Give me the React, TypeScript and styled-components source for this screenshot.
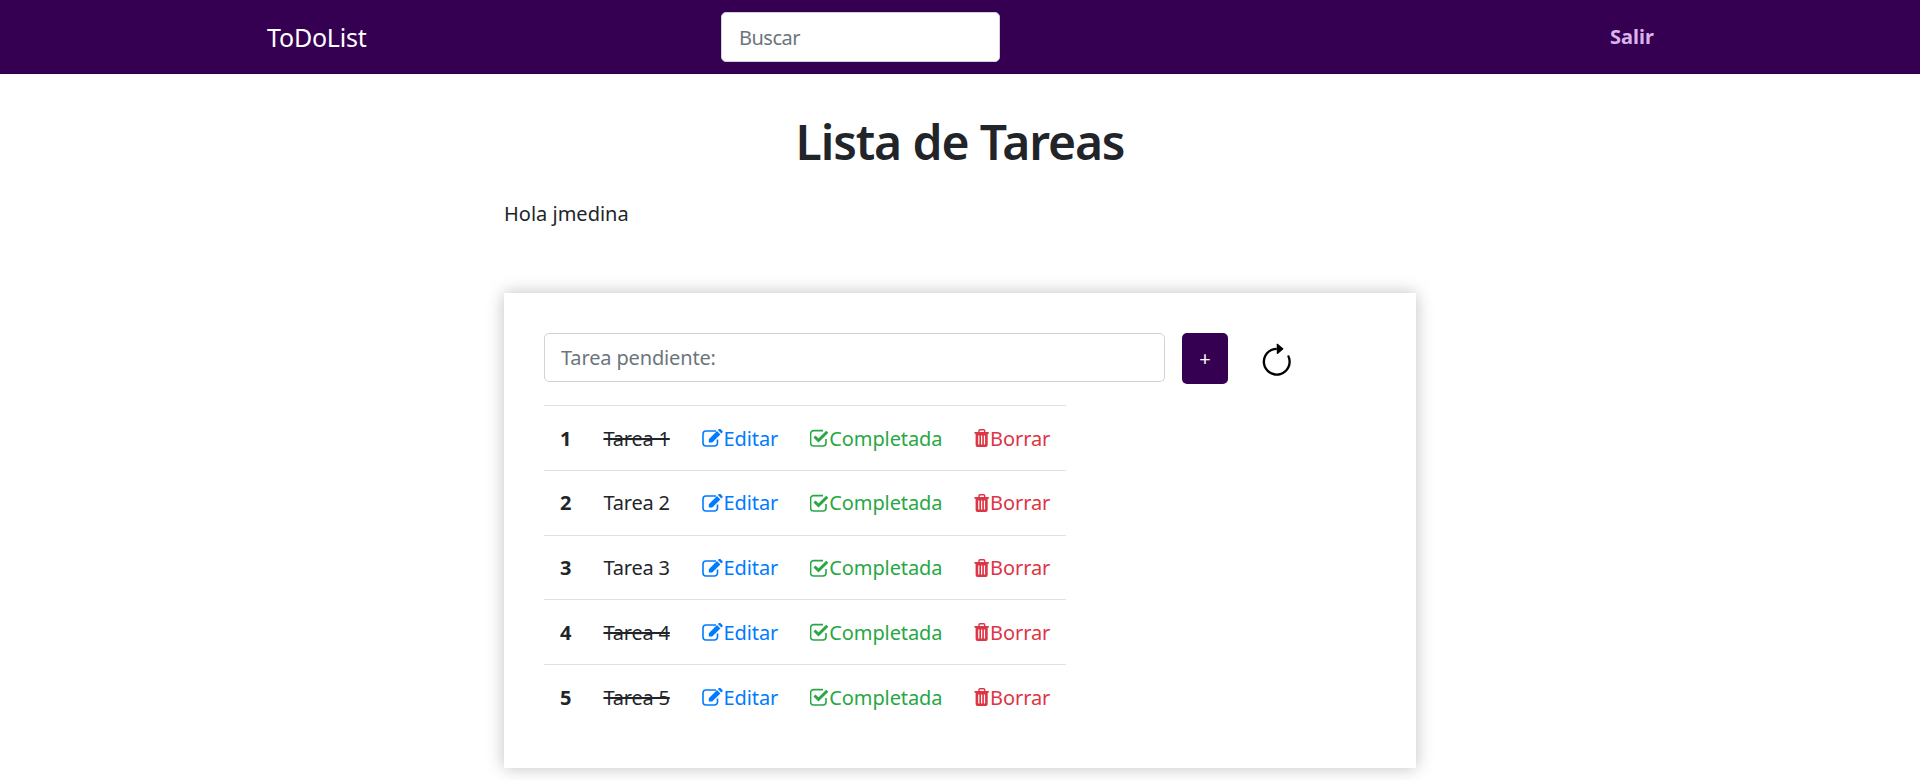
import React from "react";
import styled, { createGlobalStyle } from "styled-components";
import { BsArrowClockwise } from "react-icons/bs";

const FONT = `"Noto Sans", "Open Sans", sans-serif`;

const Global = createGlobalStyle`
  html, body { margin: 0; padding: 0; background: #fff; }
  body { font-family: ${FONT}; font-size: 20px; line-height: 32px; color: #212529; }
  * { box-sizing: border-box; }
`;

const Navbar = styled.nav`
  height: 74px;
  background: #360052;
  display: grid;
  grid-template-columns: 454px 889px auto;
  align-items: center;
  padding-left: 267px;
`;

const Brand = styled.a`
  color: #fff;
  font-size: 25px;
  line-height: 37px;
  letter-spacing: -0.2px;
`;

const SearchInput = styled.input`
  width: 279px;
  height: 50px;
  border: 1px solid #ced4da;
  border-radius: 5px;
  background: #fff;
  padding: 0 17px;
  font: inherit;
  letter-spacing: -0.5px;
  color: #495057;
  &::placeholder { color: #6c757d; opacity: 1; }
`;

const NavLink = styled.a`
  color: #d9b3ec;
  font-weight: 700;
`;

const Main = styled.main`
  width: 912px;
  margin: 0 auto;
  padding-bottom: 12px;
`;

const Title = styled.h1`
  margin: 38px 0 26px;
  font-size: 48px;
  line-height: 60px;
  font-weight: 600;
  letter-spacing: -1.1px;
  text-align: center;
  color: #212529;
`;

const Greeting = styled.p`
  margin: 0 0 63px;
`;

const Card = styled.section`
  background: #fff;
  padding: 40px 40px 39px;
  box-shadow: 0 0 16px rgba(0, 0, 0, 0.25);
`;

const Form = styled.form`
  display: flex;
  align-items: flex-start;
  margin-bottom: 21px;
`;

const TaskInput = styled.input`
  width: 621px;
  height: 49px;
  border: 1px solid #ced4da;
  border-radius: 5px;
  padding: 0 16px;
  font: inherit;
  letter-spacing: -0.15px;
  &::placeholder { color: #6c757d; opacity: 1; }
`;

const AddButton = styled.button`
  width: 46px;
  height: 51px;
  margin-left: 17px;
  border: none;
  border-radius: 5px;
  background: #360052;
  color: #fff;
  font-family: inherit;
  font-size: 20px;
`;

const Refresh = styled(BsArrowClockwise)`
  margin: 9.5px 0 0 30px;
  width: 37.5px;
  height: 37.5px;
  color: #000;
`;

const Table = styled.table`
  border-collapse: collapse;
`;

const Row = styled.tr`
  border-top: 1px solid #dee2e6;
`;

const Cell = styled.td`
  padding: 16.5px 16px 15.25px;
  white-space: nowrap;
  letter-spacing: -0.2px;
`;

const Num = styled.th`
  padding: 16.5px 16px 15.25px;
  font-weight: 700;
  text-align: left;
`;

const TaskName = styled.span<{ $done: boolean }>`
  text-decoration: ${(p) => (p.$done ? "line-through" : "none")};
`;

const Action = styled.a<{ $color: string }>`
  color: ${(p) => p.$color};
  letter-spacing: -0.1px;
`;

const Glyph = styled.svg`
  height: 18px;
  vertical-align: -1.5px;
`;

const EditIcon = () => (
  <Glyph width="21.7" viewBox="0 0 21.7 18">
    <path d="M15.5 10.5V14a3 3 0 0 1-3 3H4a3 3 0 0 1-3-3V5a3 3 0 0 1 3-3h10" fill="none" stroke="currentColor" strokeWidth="1.6" />
    <path d="M6.8 10.2 15 2l3.4 3.4-8.2 8.2H6.8zM15.9 1.1 17 0a1 1 0 0 1 1.4 0l2 2a1 1 0 0 1 0 1.4l-1.1 1.1z" fill="currentColor" />
  </Glyph>
);

const CheckIcon = () => (
  <Glyph width="19.1" viewBox="0 0 19.1 18">
    <path d="M16 10v4a3 3 0 0 1-3 3H3.6a3 3 0 0 1-3-3V4.6a3 3 0 0 1 3-3H13" fill="none" stroke="currentColor" strokeWidth="1.6" />
    <path d="M4.5 7.5l4 4 8.8-8.8" fill="none" stroke="currentColor" strokeWidth="3" />
  </Glyph>
);

const TrashIcon = () => (
  <Glyph width="15.7" viewBox="0 0 15.7 18">
    <path d="M5 3.5V1.8a1 1 0 0 1 1-1h3.7a1 1 0 0 1 1 1v1.7" fill="none" stroke="currentColor" strokeWidth="1.4" />
    <path
      fillRule="evenodd"
      d="M.5 3h14.3v1.7h-1.1V16a2 2 0 0 1-2 2H3.6a2 2 0 0 1-2-2V4.7H.5zM4.2 6.5v9h1.2v-9zM7.05 6.5v9h1.2v-9zM9.9 6.5v9h1.2v-9z"
      fill="currentColor"
    />
  </Glyph>
);

const tasks = [
  { id: 1, name: "Tarea 1", done: true },
  { id: 2, name: "Tarea 2", done: false },
  { id: 3, name: "Tarea 3", done: false },
  { id: 4, name: "Tarea 4", done: true },
  { id: 5, name: "Tarea 5", done: true },
];

export default function App() {
  return (
    <>
      <Global />
      <Navbar>
        <Brand>ToDoList</Brand>
        <SearchInput placeholder="Buscar" />
        <NavLink>Salir</NavLink>
      </Navbar>
      <Main>
        <Title>Lista de Tareas</Title>
        <Greeting>Hola jmedina</Greeting>
        <Card>
          <Form onSubmit={(e) => e.preventDefault()}>
            <TaskInput placeholder="Tarea pendiente:" />
            <AddButton>+</AddButton>
            <Refresh />
          </Form>
          <Table>
            <tbody>
              {tasks.map((t) => (
                <Row key={t.id}>
                  <Num>{t.id}</Num>
                  <Cell>
                    <TaskName $done={t.done}>{t.name}</TaskName>
                  </Cell>
                  <Cell>
                    <Action $color="#007bff"><EditIcon />Editar</Action>
                  </Cell>
                  <Cell>
                    <Action $color="#28a745"><CheckIcon />Completada</Action>
                  </Cell>
                  <Cell>
                    <Action $color="#dc3545"><TrashIcon />Borrar</Action>
                  </Cell>
                </Row>
              ))}
            </tbody>
          </Table>
        </Card>
      </Main>
    </>
  );
}
